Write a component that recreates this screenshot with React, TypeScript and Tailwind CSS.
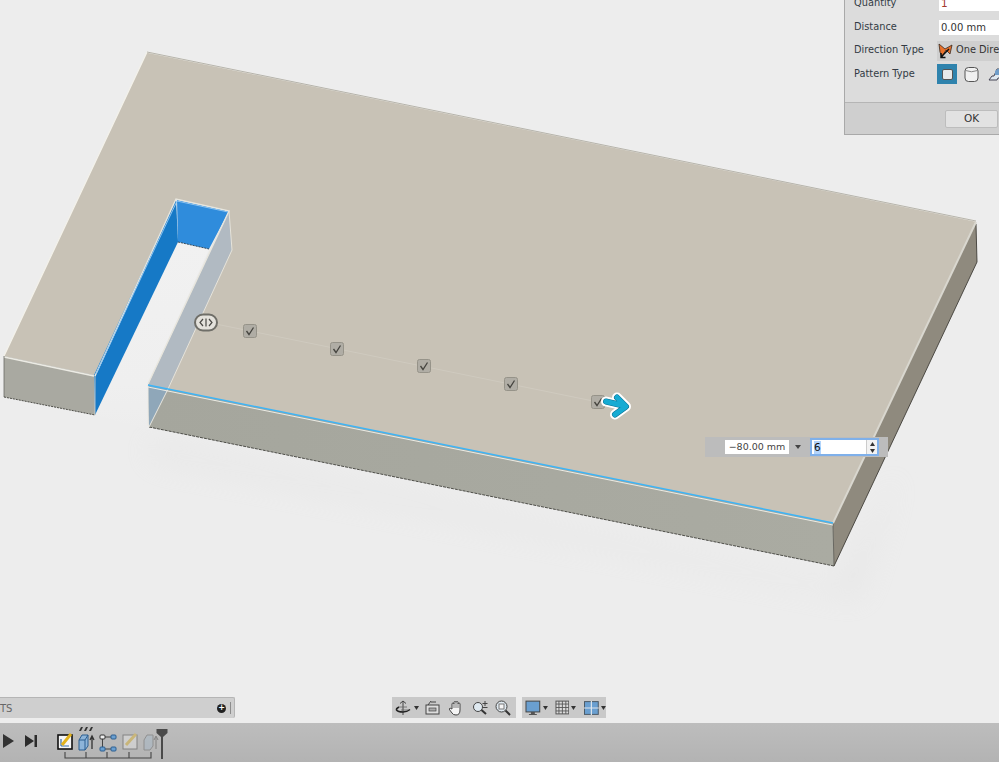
const font = { fontFamily: '"DejaVu Sans", sans-serif' };

function Model() {
  return (
    <svg className="absolute inset-0" width="999" height="723" viewBox="0 0 999 723">
      <defs>
        <filter id="soft" x="-20%" y="-20%" width="140%" height="140%"><feGaussianBlur stdDeviation="14" /></filter>
        <linearGradient id="front" x1="0" y1="0" x2="1" y2="0">
          <stop offset="0" stopColor="#a5a69d" />
          <stop offset="1" stopColor="#aaaba2" />
        </linearGradient>
        <linearGradient id="floor" x1="0" y1="0" x2="0" y2="1">
          <stop offset="0" stopColor="#f1f1f1" />
          <stop offset="0.75" stopColor="#efefef" />
          <stop offset="1" stopColor="#ededed" />
        </linearGradient>
      </defs>
      <polygon points="150,440 834,585 900,470 860,600 150,460" fill="#dcdcdc" opacity="0.3" filter="url(#soft)" />

      {/* slot floor */}
      <polygon points="178,242 209,249 148,385 149,430 95,415" fill="url(#floor)" />
      {/* top face */}
      <polygon points="147,52 976,221 833,523 148,385 229,211 176,199 94,375 4,356" fill="#c8c2b6" />
      {/* right side */}
      <polygon points="833,523 976,222 977,262 834,566" fill="#8f8a7e" />
      {/* front long face */}
      <polygon points="148,385 833,523 834,566 149,427" fill="url(#front)" />
      <polygon points="148,385 168,389 149,427" fill="#8fa7b9" />
      {/* left block front */}
      <polygon points="4,356 94,375 95,415 4,397" fill="#a9a9a1" />
      {/* inner faces */}
      <polygon points="94,375 176,199 178,242 95,415" fill="#1679c6" />
      <polygon points="177,200 229,211 209,249 178,242" fill="#2f8cdc" />
      <polygon points="229,211 232,250 168,389 148,385" fill="#b1bac2" />

      {/* edges */}
      <polyline points="4,356 147,52 976,221" fill="none" stroke="#f3f1ea" strokeWidth="1.3" />
      <polyline points="147,52 976,221" fill="none" stroke="#77746c" strokeWidth="0.5" />
      <polyline points="4,357 94,376" fill="none" stroke="#ecebe4" strokeWidth="1.6" />
      <polyline points="4,356 4,397" fill="none" stroke="#6a6a64" strokeWidth="0.8" />
      <polyline points="4,397 95,415" fill="none" stroke="#3f3f3a" strokeWidth="0.9" strokeDasharray="2 1" />
      <polyline points="95,375 95,415" fill="none" stroke="#d8d6cf" strokeWidth="0.8" />
      <polyline points="95,376 176,199 229,211 148,384" fill="none" stroke="#e8e6de" strokeWidth="1.4" />
      <polyline points="96,374 177,201 228,212" fill="none" stroke="#8fc4f0" strokeWidth="1" />
      <polyline points="229,211 232,250 168,389" fill="none" stroke="#e6e3da" strokeWidth="1" />
      <polyline points="178,242 209,249" fill="none" stroke="#26323c" strokeWidth="0.8" strokeDasharray="2 1" />
      <polyline points="149,427 834,566" fill="none" stroke="#3f3f3a" strokeWidth="0.9" strokeDasharray="3 1" />
      <polyline points="834,566 977,262 976,224" fill="none" stroke="#3f3d38" strokeWidth="0.9" />
      <polyline points="833,524 834,566" fill="none" stroke="#55544e" strokeWidth="0.8" />
      <polyline points="833,523 976,222" fill="none" stroke="#d9d7cf" strokeWidth="2" />
      <polyline points="148,385 148,426" fill="none" stroke="#eceae4" strokeWidth="1" />
      <polyline points="168,389 149,427" fill="none" stroke="#e8e6df" strokeWidth="1" />
      <polyline points="148,387 833,525" fill="none" stroke="#ecece5" strokeWidth="1" />
      <polyline points="148,385 833,523" fill="none" stroke="#3db4f6" strokeWidth="1.5" />

      {/* pattern path */}
      <polyline points="206,322 598,402" fill="none" stroke="#cfcabf" strokeWidth="1" />
      {[[250, 331], [337, 349], [424, 366], [511, 384], [598, 402]].map(([x, y]) => (
        <g key={x}>
          <rect x={x - 6.5} y={y - 6.5} width="13" height="13" rx="2" fill="#b0ada5" stroke="#969389" />
          <path d={`M${x - 3.5} ${y} l2.5 3.500 l4.500 -7`} fill="none" stroke="#45443f" strokeWidth="1.3" />
        </g>
      ))}

      {/* slider handle */}
      <rect x="195" y="314.500" width="22" height="16" rx="8" fill="#e4e2dc" stroke="#6f6e68" strokeWidth="2" />
      <path d="M203 319 l-3 3.500 l3 3.500 M209 319 l3 3.500 l-3 3.500 M206 318.500 v8" fill="none" stroke="#4a4945" strokeWidth="1.2" />

      {/* arrow */}
      <path d="M606 401.500 L623 405.500 M617 397.500 L626 406.500 L615 414.500" fill="none" stroke="#ffffff" strokeWidth="10" strokeLinecap="round" strokeLinejoin="round" />
      <path d="M606 401.500 L623 405.500 M617 397.500 L626 406.500 L615 414.500" fill="none" stroke="#0b6f8f" strokeWidth="6" strokeLinecap="round" strokeLinejoin="round" />
      <path d="M606 401.500 L623 405.500 M617 397.500 L626 406.500 L615 414.500" fill="none" stroke="#16abd3" strokeWidth="5" strokeLinecap="round" strokeLinejoin="round" />
    </svg>
  );
}

function Row({ label, children }: { label: string; children: React.ReactNode }) {
  return (
    <div className="flex h-[23.500px] items-center">
      <span className="w-[94px] shrink-0 whitespace-nowrap pl-[9px] text-[9.800px] text-[#333b44]">{label}</span>
      {children}
    </div>
  );
}

function Panel() {
  return (
    <div className="absolute right-0 top-0 flex h-[135px] w-[155px] flex-col overflow-hidden border-b border-l border-[#a9a9a9] bg-[#dcdcdc]" style={font}>
      <div className="-mt-[8px] h-[110px] w-[230px] shrink-0">
        <Row label="Quantity">
          <div className="flex h-[15px] w-[80px] items-center bg-white pl-[2px] text-[10.500px] text-[#a33a2c]">1</div>
        </Row>
        <Row label="Distance">
          <div className="flex h-[15px] w-[80px] items-center bg-white pl-[2px] text-[10px] text-[#333]">0.00 mm</div>
        </Row>
        <Row label="Direction Type">
          <div className="-ml-[2px] flex h-[20px] w-[90px] items-center gap-[3px] whitespace-nowrap bg-[#cfcfcf] pl-[1px] text-[9.800px] text-[#333]">
            <svg width="15" height="17" viewBox="0 0 15 17">
              <path d="M1 2 L7 7 L14 3 L12 12 L8 8 L4 15 L2 10 Z" fill="#e9722c" stroke="#3a2a20" strokeWidth="0.8" />
              <path d="M11 7 L3 15 M3 11 v4.500 h4.500" fill="none" stroke="#111" strokeWidth="1.5" />
            </svg>
            One Direction
          </div>
        </Row>
        <Row label="Pattern Type">
          <div className="-ml-[2px] flex items-center">
            <div className="flex h-[20px] w-[20px] items-center justify-center bg-[#2f83ad]">
              <div className="h-[11px] w-[11px] rounded-[2px] border border-[#555] bg-[#e9e9e9]" />
            </div>
            <svg className="ml-[6px]" width="17" height="17" viewBox="0 0 17 17">
              <rect x="2" y="1.500" width="13" height="14" rx="3.500" fill="#f1f1f1" stroke="#555" />
              <path d="M2.500 4.500 q6 2.500 12 0" fill="none" stroke="#888" />
            </svg>
            <svg className="ml-[8px]" width="20" height="16" viewBox="0 0 20 16">
              <path d="M1 14 L4 10 H6 L9 3 H18 V12 H10 L9 14 Z" fill="#dfe8f0" stroke="#445" />
              <path d="M7 5 Q12 1 18 3 V9 H7 Z" fill="#6f9dc9" />
            </svg>
          </div>
        </Row>
      </div>
      <div className="flex flex-1 items-start border-t border-[#b5b5b5] bg-[#cfcfcf] pl-[100px] pt-[7px]">
        <div className="flex h-[18px] w-[53px] shrink-0 items-center justify-center rounded-[2px] border border-[#bdbdbd] bg-[#e2e2e2] text-[10.500px] text-[#333]">OK</div>
      </div>
    </div>
  );
}

function ValueBar() {
  return (
    <div className="absolute left-[705px] top-[437px] flex h-[20px] w-[183px] items-center bg-[#bcbcbc]" style={font}>
      <div className="ml-[20px] flex h-[14px] w-[64px] items-center justify-center bg-white text-[9.500px] text-[#444]">−80.00 mm</div>
      <svg className="ml-[5px]" width="8" height="6" viewBox="0 0 8 6"><path d="M1 1 H7 L4 5 Z" fill="#444" /></svg>
      <div className="ml-[8px] flex h-[18px] w-[69px] items-center border-2 border-[#7fb0ea] bg-white">
        <span className="ml-[2px] bg-[#b3d4fb] text-[10.500px] leading-[13px] text-[#111]">6</span>
        <div className="ml-auto flex h-full w-[11px] flex-col items-center justify-around border-l border-[#ccc] bg-[#f2f2f2]">
          <svg width="5" height="4" viewBox="0 0 5 4"><path d="M0 4 L2.500 0 L5 4 Z" fill="#333" /></svg>
          <svg width="5" height="4" viewBox="0 0 5 4"><path d="M0 0 L2.500 4 L5 0 Z" fill="#333" /></svg>
        </div>
      </div>
    </div>
  );
}

const Caret = () => (
  <svg width="5" height="4" viewBox="0 0 5 4"><path d="M0 0 H5 L2.500 4 Z" fill="#333" /></svg>
);

function NavBars() {
  return (
    <div className="flex gap-[6px]">
      <div className="flex h-[21px] w-[124px] items-center bg-[#c9c9c9] pl-[3px]">
        <div className="flex items-center gap-[3px]">
          <svg width="16" height="16" viewBox="0 0 16 16">
            <path d="M8 1 V15 M5 3.500 L8 1 L11 3.500" fill="none" stroke="#444" strokeWidth="1" />
            <path d="M4 7 Q1 8.500 1.500 10 Q3 12 8 12 Q12 12 15 9.500" fill="none" stroke="#222" strokeWidth="1.500" />
            <path d="M4 7 H12 M6 10 H13" stroke="#666" strokeWidth="0.8" />
          </svg>
          <Caret />
        </div>
        <svg className="ml-[6px]" width="15" height="15" viewBox="0 0 15 15">
          <rect x="1" y="5" width="13" height="9" fill="#ddd" stroke="#444" />
          <rect x="4" y="8" width="7" height="3" fill="#aaa" stroke="#444" strokeWidth="0.7" />
          <path d="M3 5 L6 1 M11 2 H6" stroke="#444" fill="none" />
        </svg>
        <svg className="ml-[9px]" width="15" height="16" viewBox="0 0 15 16">
          <path d="M3 9 V4 a1 1 0 0 1 2 0 V2.500 a1 1 0 0 1 2 0 V2.500 a1 1 0 0 1 2 0 V4 a1 1 0 0 1 2 0 V10 q0 5 -4 5 q-3 0 -4 -2 l-3 -4 q1 -1.500 3 0 Z" fill="#f4f4f4" stroke="#444" />
          <path d="M5 4 V8 M7 3 V8 M9 4 V8" stroke="#444" strokeWidth="0.7" />
        </svg>
        <svg className="ml-[8px]" width="17" height="15" viewBox="0 0 17 15">
          <circle cx="6" cy="7" r="4.500" fill="#dfe9f0" stroke="#444" />
          <path d="M9.500 10 L14 14" stroke="#333" strokeWidth="2" />
          <path d="M13 1 V6 M10.500 3.500 H15.500 M10.500 7.500 H15.500" stroke="#444" />
        </svg>
        <svg className="ml-[6px]" width="16" height="16" viewBox="0 0 16 16">
          <circle cx="6.500" cy="6.500" r="5.500" fill="#dfe9f0" stroke="#444" />
          <rect x="4" y="4" width="5" height="5" fill="#f5f5f5" stroke="#777" />
          <path d="M10.500 10.500 L15 15" stroke="#333" strokeWidth="2" />
        </svg>
      </div>
      <div className="flex h-[21px] w-[84px] items-center gap-[2px] bg-[#c9c9c9] pl-[3px]">
        <svg width="16" height="16" viewBox="0 0 16 16">
          <rect x="1" y="1" width="14" height="11" fill="#6a9fd0" stroke="#444" />
          <path d="M6 12 H10 V14 H12 V15 H4 V14 H6 Z" fill="#555" />
        </svg>
        <Caret />
        <svg className="ml-[5px]" width="15" height="15" viewBox="0 0 15 15">
          <rect x="1" y="1" width="13" height="13" fill="#dcdcdc" stroke="#555" />
          <path d="M4 1 V14 M7.500 1 V14 M11 1 V14 M1 4 H14 M1 7.500 H14 M1 11 H14" stroke="#555" strokeWidth="0.9" />
        </svg>
        <Caret />
        <svg className="ml-[6px]" width="15" height="14" viewBox="0 0 15 14">
          <rect x="0.500" y="0.500" width="14" height="13" fill="#6a9fd0" stroke="#4c5a66" />
          <path d="M7.500 0 V14 M0 7 H15" stroke="#dfe6ec" strokeWidth="1.200" />
        </svg>
        <Caret />
      </div>
    </div>
  );
}

function Browser() {
  return (
    <div className="flex h-[21px] w-[235px] items-center rounded-r-[2px] border-r border-t border-[#b5b5b5] bg-[#cfcfcf] pr-[3px] text-[10px] text-[#666]" style={font}>
      <span>TS</span>
      <div className="ml-auto flex items-center gap-[4px]">
        <div className="flex h-[9px] w-[9px] items-center justify-center rounded-full bg-[#222] text-[8px] font-bold leading-none text-white">+</div>
        <div className="h-[12px] w-[1px] bg-[#8c8c8c]" />
      </div>
    </div>
  );
}

function Timeline() {
  return (
    <div className="flex h-[39px] items-start bg-gradient-to-b from-[#bdbdbd] to-[#b3b3b3] pl-[3px]">
      <svg className="mt-[11px]" width="11" height="14" viewBox="0 0 11 14"><path d="M0 0 L11 7 L0 14 Z" fill="#333" /></svg>
      <svg className="ml-[11px] mt-[12px]" width="12" height="12" viewBox="0 0 12 12"><path d="M0 0 L9 6 L0 12 Z M9.500 0 H12 V12 H9.500 Z" fill="#2c2c2c" /></svg>
      <div className="relative ml-[20px] h-[39px] w-[120px]">
        <svg width="120" height="39" viewBox="0 0 120 39" className="block">
          {/* sketch */}
          <rect x="1" y="12" width="14" height="14" fill="#f5f5f5" stroke="#111" strokeWidth="1.600" />
          <path d="M4 23 V16 M4 23 H12" stroke="#3a6ea8" strokeWidth="1.200" />
          <path d="M5 22 L14 11" stroke="#e2b21c" strokeWidth="3" />
          {/* extrude */}
          <path d="M22 17 L25 12 H31 V23 L28 27 H22 Z" fill="#8db4d9" stroke="#2d5f90" />
          <path d="M28 17 V27 M22 17 H28 L31 12" fill="none" stroke="#2d5f90" />
          <path d="M35 26 V14 M33 17 L35 13 L37 17" fill="none" stroke="#333" strokeWidth="1.300" />
          <path d="M22 8 l2 -4 h2 l-2 4 Z M27 8 l2 -4 h2 l-2 4 Z M32 8 l2 -4 h2 l-2 4 Z" fill="#333" />
          {/* pattern */}
          <path d="M47 14 H55 M47 26 H55 M45.500 16 V24" stroke="#444" fill="none" />
          <rect x="43" y="12" width="5" height="4" rx="1" fill="#eee" stroke="#333" />
          <rect x="54" y="12" width="5" height="4" rx="1" fill="#6a9fd0" stroke="#2d5f90" />
          <rect x="43" y="24" width="5" height="4" rx="1" fill="#6a9fd0" stroke="#2d5f90" />
          <rect x="54" y="24" width="5" height="4" rx="1" fill="#6a9fd0" stroke="#2d5f90" />
          {/* faded */}
          <g opacity="0.4">
            <rect x="66" y="12" width="14" height="14" fill="#f0f0f0" stroke="#333" />
            <path d="M69 22 L79 11" stroke="#e2b21c" strokeWidth="3" />
            <path d="M87 17 L90 12 H96 V23 L93 27 H87 Z" fill="#a4b9cb" stroke="#555" />
            <path d="M99 26 V14 M97 17 L99 13 L101 17" fill="none" stroke="#333" />
          </g>
          {/* ruler */}
          <path d="M8 29 V35 H94 V29 M29 29 V35 M50 29 V35 M72 29 V35" fill="none" stroke="#444" strokeWidth="1.100" />
        </svg>
        <svg className="absolute left-[99px] top-[6px]" width="12" height="30" viewBox="0 0 12 30">
          <path d="M0.500 0 H11.500 V4 L7 8 V30 H5 V8 L0.500 4 Z" fill="#4a4a4a" />
        </svg>
      </div>
    </div>
  );
}

export default function App() {
  return (
    <div className="flex h-[762px] w-[999px] flex-col overflow-hidden bg-[#ededed]">
      <div className="relative flex flex-1 flex-col justify-end pb-[5px]">
        <Model />
        <Panel />
        <ValueBar />
        <div className="relative flex items-center">
          <Browser />
          <div className="ml-[157px]">
            <NavBars />
          </div>
        </div>
      </div>
      <Timeline />
    </div>
  );
}
